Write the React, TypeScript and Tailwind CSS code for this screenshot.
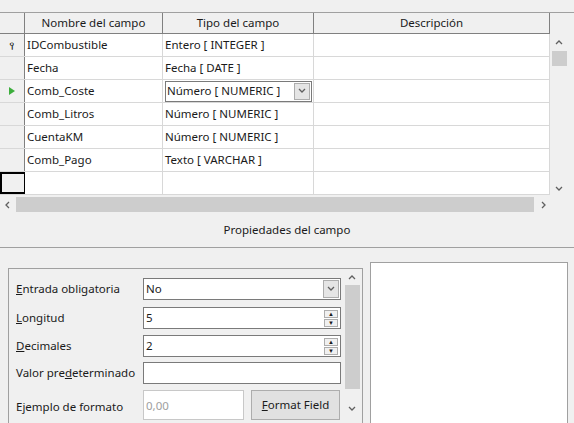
import React from 'react'

const font = { fontFamily: '"Noto Sans", "Open Sans", sans-serif' }

const rows = [
  { name: 'IDCombustible', type: 'Entero [ INTEGER ]', mark: 'key' },
  { name: 'Fecha', type: 'Fecha [ DATE ]' },
  { name: 'Comb_Coste', type: 'Número [ NUMERIC ]', mark: 'cur' },
  { name: 'Comb_Litros', type: 'Número [ NUMERIC ]' },
  { name: 'CuentaKM', type: 'Número [ NUMERIC ]' },
  { name: 'Comb_Pago', type: 'Texto [ VARCHAR ]' },
  { name: '', type: '' },
]

function Chevron({ dir }: { dir: 'up' | 'down' | 'left' | 'right' }) {
  const d = { up: 'M1 5 L4 2 L7 5', down: 'M1 2 L4 5 L7 2', left: 'M5 1 L2 4 L5 7', right: 'M2 1 L5 4 L2 7' }[dir]
  return (
    <svg width="8" height="8" viewBox="0 0 8 8">
      <path d={d} stroke="#606060" strokeWidth="1.3" fill="none" />
    </svg>
  )
}

function Spin() {
  return (
    <div className="flex flex-col gap-[1px] pr-[2px]">
      <div className="w-[14px] h-[8px] border border-[#adadad] bg-[#f0f0f0] flex items-center justify-center text-[6px] leading-none">▲</div>
      <div className="w-[14px] h-[8px] border border-[#adadad] bg-[#f0f0f0] flex items-center justify-center text-[6px] leading-none">▼</div>
    </div>
  )
}

export default function App() {
  return (
    <div className="w-[574px] h-[423px] bg-[#f0f0f0] overflow-hidden text-[11.5px] text-[#1a1a1a] flex flex-col" style={font}>
      <div className="h-[13px] border-b border-[#a0a0a0]" />
      <div className="flex">
        <div className="w-[550px]">
          {/* header */}
          <div className="flex h-[21px] border-b border-[#808080]">
            <div className="w-[25px] border-r border-[#808080]" />
            <div className="w-[138px] border-r border-[#808080] flex items-center justify-center">Nombre del campo</div>
            <div className="w-[151px] border-r border-[#808080] flex items-center justify-center">Tipo del campo</div>
            <div className="w-[236px] border-r border-[#808080] flex items-center justify-center">Descripción</div>
          </div>
          {rows.map((r, i) => (
            <div key={i} className="flex h-[23px] bg-white border-b border-[#d8d8d8]">
              <div className={`w-[25px] bg-[#f0f0f0] border-r border-[#808080] flex items-center justify-center ${i === 6 ? 'border-2 border-black' : ''}`}>
                {r.mark === 'key' && <span className="text-[10px] leading-none">⫯</span>}
                {r.mark === 'cur' && (
                  <svg width="6" height="8" viewBox="0 0 6 8"><path d="M0 0 L6 4 L0 8 Z" fill="#3cae3c" /></svg>
                )}
              </div>
              <div className="w-[138px] border-r border-[#d8d8d8] flex items-center pl-[2px]">{r.name}</div>
              <div className="w-[151px] border-r border-[#d8d8d8] flex items-center pl-[2px]">
                {r.mark === 'cur' ? (
                  <div className="flex items-center justify-between w-[147px] h-[21px] border border-[#7a7a7a] pl-[1px]">
                    <span>{r.type}</span>
                    <div className="w-[16px] h-[17px] mr-[1px] bg-[#e5e5e5] border border-[#adadad] flex items-center justify-center"><Chevron dir="down" /></div>
                  </div>
                ) : r.type}
              </div>
              <div className="w-[236px] border-r border-[#d8d8d8]" />
            </div>
          ))}
        </div>
        <div className="w-[18px] bg-[#f0f0f0] flex flex-col items-center pt-[26px]">
          <Chevron dir="up" />
          <div className="w-[15px] h-[15px] bg-[#cdcdcd] mt-[4px]" />
          <div className="flex-1" />
          <div className="mb-[2px]"><Chevron dir="down" /></div>
        </div>
      </div>
      <div className="flex items-center h-[17px] mt-[1px]">
        <div className="w-[16px] flex justify-center"><Chevron dir="left" /></div>
        <div className="w-[518px] h-[15px] bg-[#cdcdcd]" />
        <div className="w-[20px] flex justify-center"><Chevron dir="right" /></div>
      </div>
      <div className="h-[35px] flex items-center justify-center border-b border-[#a0a0a0]">Propiedades del campo</div>
      <div className="flex flex-1 pt-[14px]">
        <div className="w-[355px] ml-[8px] mt-[6px] border border-[#a0a0a0] border-b-0 flex">
          <div className="w-[335px] pl-[7px] pt-[9px] flex flex-col">
            <div className="flex items-center h-[22px] mb-[7px]">
              <span className="w-[127px]"><u>E</u>ntrada obligatoria</span>
              <div className="w-[198px] h-[22px] bg-white border border-[#7a7a7a] flex items-center justify-between pl-[2px]">
                <span>No</span>
                <div className="w-[16px] h-[18px] mr-[1px] bg-[#e5e5e5] border border-[#adadad] flex items-center justify-center"><Chevron dir="down" /></div>
              </div>
            </div>
            <div className="flex items-center h-[22px] mb-[6px]">
              <span className="w-[127px]"><u>L</u>ongitud</span>
              <div className="w-[198px] h-[22px] bg-white border border-[#7a7a7a] flex items-center justify-between pl-[2px]">
                <span>5</span><Spin />
              </div>
            </div>
            <div className="flex items-center h-[22px] mb-[5px]">
              <span className="w-[127px]"><u>D</u>ecimales</span>
              <div className="w-[198px] h-[22px] bg-white border border-[#7a7a7a] flex items-center justify-between pl-[2px]">
                <span>2</span><Spin />
              </div>
            </div>
            <div className="flex items-center h-[22px] mb-[6px]">
              <span className="w-[127px]">Valor pre<u>d</u>eterminado</span>
              <div className="w-[198px] h-[22px] bg-white border border-[#7a7a7a]" />
            </div>
            <div className="flex items-start h-[30px]">
              <span className="w-[127px] pt-[8px]">Ejemplo de formato</span>
              <div className="w-[101px] h-[30px] bg-white border border-[#c8c8c8] pl-[2px] pt-[6px] text-[#a0a0a0]">0,00</div>
              <div className="ml-[7px] w-[89px] h-[30px] border border-[#adadad] bg-[#e1e1e1] flex items-center justify-center"><span><u>F</u>ormat Field</span></div>
            </div>
          </div>
          <div className="w-[16px] flex flex-col items-center pt-[5px]">
            <Chevron dir="up" />
            <div className="w-[15px] h-[104px] bg-[#cdcdcd] mt-[3px]" />
            <div className="mt-[16px]"><Chevron dir="down" /></div>
          </div>
        </div>
        <div className="w-[198px] ml-[7px] bg-white border border-[#a0a0a0] border-b-0" />
      </div>
    </div>
  )
}
